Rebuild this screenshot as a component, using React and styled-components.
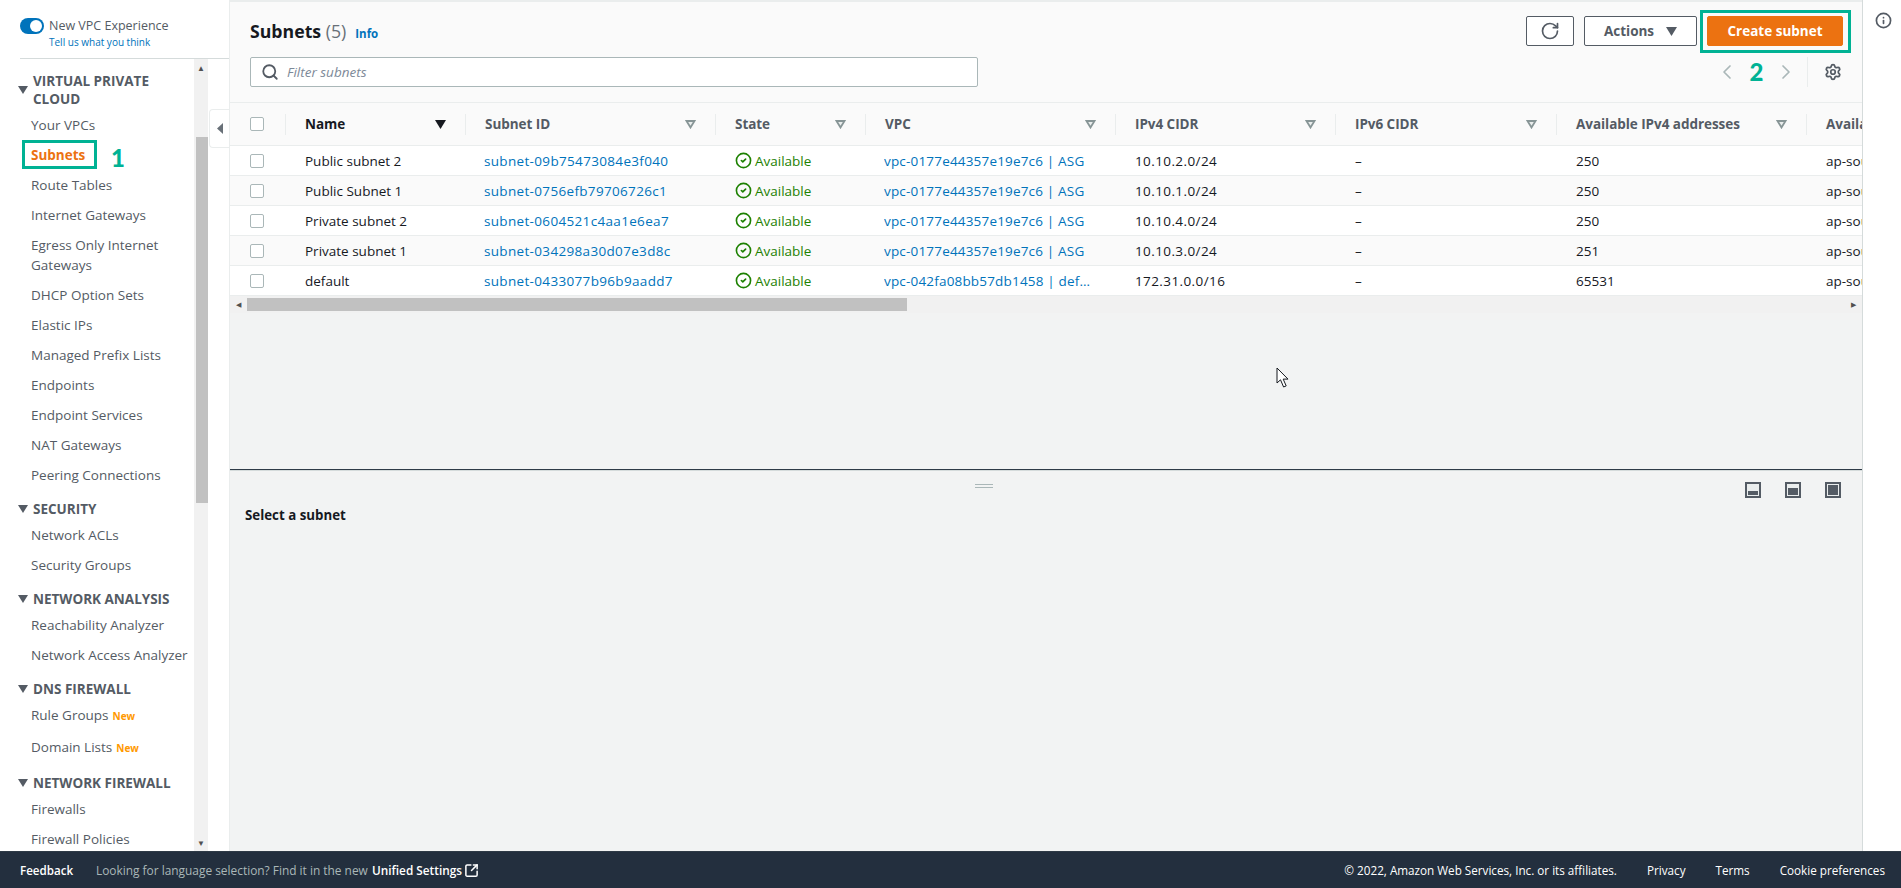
import React from "react";
import styled, { createGlobalStyle } from "styled-components";
import {
	ChevronLeft,
	ChevronRight,
	CircleCheck,
	Info,
	RotateCw,
	Search,
	Settings,
	SquareArrowOutUpRight,
} from "lucide-react";

const navSections = [
	{
		title: "VIRTUAL PRIVATE CLOUD",
		items: [
			"Your VPCs",
			"Subnets",
			"Route Tables",
			"Internet Gateways",
			"Egress Only Internet Gateways",
			"DHCP Option Sets",
			"Elastic IPs",
			"Managed Prefix Lists",
			"Endpoints",
			"Endpoint Services",
			"NAT Gateways",
			"Peering Connections",
		],
	},
	{ title: "SECURITY", items: ["Network ACLs", "Security Groups"] },
	{ title: "NETWORK ANALYSIS", items: ["Reachability Analyzer", "Network Access Analyzer"] },
	{ title: "DNS FIREWALL", items: ["Rule Groups", "Domain Lists"], fresh: true },
	{ title: "NETWORK FIREWALL", items: ["Firewalls", "Firewall Policies"] },
];

const columns = ["Name", "Subnet ID", "State", "VPC", "IPv4 CIDR", "IPv6 CIDR", "Available IPv4 addresses", "Availability Zone"];

const rows = [
	["Public subnet 2", "subnet-09b75473084e3f040", "vpc-0177e44357e19e7c6 | ASG", "10.10.2.0/24", "250"],
	["Public Subnet 1", "subnet-0756efb79706726c1", "vpc-0177e44357e19e7c6 | ASG", "10.10.1.0/24", "250"],
	["Private subnet 2", "subnet-0604521c4aa1e6ea7", "vpc-0177e44357e19e7c6 | ASG", "10.10.4.0/24", "250"],
	["Private subnet 1", "subnet-034298a30d07e3d8c", "vpc-0177e44357e19e7c6 | ASG", "10.10.3.0/24", "251"],
	["default", "subnet-0433077b96b9aadd7", "vpc-042fa08bb57db1458 | default", "172.31.0.0/16", "65531"],
];

const GRID = "55px 180px 250px 150px 250px 220px 221px 250px 220px";
const TEAL = "#00b294";

function SortMark({ active }) {
	return (
		<svg width="11" height="9" viewBox="0 0 11 9">
			{active ? (
				<path d="M0 0h11L5.5 9z" fill="#16191f" />
			) : (
				<path d="M1.5 1h8L5.5 7.5z" fill="#eaeded" stroke="#879596" strokeWidth="1.8" />
			)}
		</svg>
	);
}

function PanelIcon({ fill }) {
	return (
		<svg width="16" height="16" viewBox="0 0 16 16">
			<rect width="16" height="16" fill="#545b64" />
			<rect x="2" y="2" width="12" height="12" fill="#eaeded" />
			<rect x="3" y={13 - fill} width="10" height={fill} fill="#545b64" />
		</svg>
	);
}

function App() {
	return (
		<Page>
			<GlobalStyle />
			<Body>
				<Sidebar>
					<SideTop>
						<ToggleRow>
							<Toggle />
							<ToggleText>
								<span>New VPC Experience</span>
								<TellUs>Tell us what you think</TellUs>
							</ToggleText>
						</ToggleRow>
					</SideTop>
					<SideBottom>
						<Nav>
							{navSections.map((section) => (
								<NavSection key={section.title}>
									<SectionHead>
										<svg width="10" height="8" viewBox="0 0 10 8">
											<path d="M0 0h10L5 8z" fill="#545b64" />
										</svg>
										<span>{section.title}</span>
									</SectionHead>
									{section.items.map((item) => (
										<NavItem key={item} $active={item === "Subnets"} $fresh={section.fresh}>
											{item}
											{section.fresh && <NewTag>New</NewTag>}
										</NavItem>
									))}
								</NavSection>
							))}
						</Nav>
						<NavScroll>
							<ScrollArrow>▲</ScrollArrow>
							<NavThumb />
							<ScrollArrow $bottom>▼</ScrollArrow>
						</NavScroll>
						<CollapseStrip>
							<CollapseTab>
								<svg width="6" height="11" viewBox="0 0 6 11">
									<path d="M6 0v11L0 5.5z" fill="#687078" />
								</svg>
							</CollapseTab>
						</CollapseStrip>
					</SideBottom>
					<SubnetsMark />
					<StepOne>1</StepOne>
				</Sidebar>

				<Main>
					<UpperPane>
						<TopSection>
							<TitleRow>
								<Title>
									<strong>Subnets</strong> <Count>(5)</Count>
									<InfoLink>Info</InfoLink>
								</Title>
								<Actions>
									<IconButton>
										<RotateCw size={20} strokeWidth={2} />
									</IconButton>
									<ActionsButton>
										Actions
										<svg width="11" height="9" viewBox="0 0 11 9">
											<path d="M0 0h11L5.5 9z" fill="#545b64" />
										</svg>
									</ActionsButton>
									<PrimaryButton>Create subnet</PrimaryButton>
								</Actions>
							</TitleRow>
							<FilterRow>
								<FilterBox>
									<Search size={18} strokeWidth={2.4} color="#545b64" />
									<FilterInput placeholder="Filter subnets" />
								</FilterBox>
								<Pager>
									<ChevronLeft size={24} strokeWidth={1.7} color="#aab7b8" />
									<StepTwo>2</StepTwo>
									<ChevronRight size={24} strokeWidth={1.7} color="#aab7b8" />
									<PagerGear>
										<Settings size={18} strokeWidth={2.3} color="#545b64" />
									</PagerGear>
								</Pager>
							</FilterRow>
						</TopSection>

						<TableClip>
							<HeadRow>
								<HeadCheckCell>
									<Checkbox />
								</HeadCheckCell>
								{columns.map((label, i) => (
									<HeadCell key={label} $active={i === 0}>
										<span>{label}</span>
										<SortMark active={i === 0} />
									</HeadCell>
								))}
							</HeadRow>
							{rows.map((row, i) => (
								<Row key={row[1]} $odd={i % 2 === 1}>
									<Cell>
										<Checkbox />
									</Cell>
									<Cell>{row[0]}</Cell>
									<LinkCell $spacing="0.33px">{row[1]}</LinkCell>
									<StateCell>
										<CircleCheck size={17} strokeWidth={2.3} />
										Available
									</StateCell>
									<LinkCell $spacing="0.18px">
										<Clipped>{row[2]}</Clipped>
									</LinkCell>
									<Cell $spacing="0.4px">{row[3]}</Cell>
									<Cell>–</Cell>
									<Cell>{row[4]}</Cell>
									<Cell>ap-south-1a</Cell>
								</Row>
							))}
						</TableClip>

						<HScroll>
							<HArrow>◀</HArrow>
							<HThumb />
							<HArrow $right>▶</HArrow>
						</HScroll>
						<Cursor width="14" height="21" viewBox="0 0 14 21">
							<path
								d="M1 1v15l3.5-3.2L7.6 20l2.6-1.1-3-6.8H12z"
								fill="#fff"
								stroke="#16191f"
								strokeWidth="1"
							/>
						</Cursor>
					</UpperPane>

					<LowerPane>
						<LowerBar>
							<DragHandle />
							<PanelIcons>
								<PanelIcon fill={4} />
								<PanelIcon fill={7} />
								<PanelIcon fill={10} />
							</PanelIcons>
						</LowerBar>
						<SelectHint>Select a subnet</SelectHint>
					</LowerPane>
				</Main>

				<RightRail>
					<Info size={17} strokeWidth={2.4} color="#545b64" />
				</RightRail>

				<CreateMark />
			</Body>

			<Footer>
				<FooterLeft>
					<FooterLink>Feedback</FooterLink>
					<LangNote>
						Looking for language selection? Find it in the new
					</LangNote>
					<UnifiedLink>
						Unified Settings
						<SquareArrowOutUpRight size={15} strokeWidth={2.4} />
					</UnifiedLink>
				</FooterLeft>
				<FooterRight>
					<span>© 2022, Amazon Web Services, Inc. or its affiliates.</span>
					<span>Privacy</span>
					<span>Terms</span>
					<span>Cookie preferences</span>
				</FooterRight>
			</Footer>
		</Page>
	);
}

export default App;

const GlobalStyle = createGlobalStyle`
	html, body, #root {
		margin: 0;
		height: 100%;
	}

	body {
		font-family: "Open Sans", "Noto Sans", sans-serif;
		font-size: 14px;
		color: #16191f;
		background: #fff;
		overflow: hidden;
	}

	* {
		box-sizing: border-box;
	}
`;

const Page = styled.div`
	height: 888px;
	display: flex;
	flex-direction: column;
`;

const Body = styled.div`
	position: relative;
	flex: 1;
	min-height: 0;
	display: flex;
`;

const Sidebar = styled.aside`
	position: relative;
	width: 229px;
	flex-shrink: 0;
	display: flex;
	flex-direction: column;
	background: #fff;
`;

const SideTop = styled.div`
	height: 59px;
	margin-left: 20px;
	padding-top: 16px;
	border-bottom: 1px solid #d5dbdb;
`;

const ToggleRow = styled.div`
	display: flex;
	gap: 5px;
	align-items: flex-start;
`;

const Toggle = styled.div`
	position: relative;
	width: 24px;
	height: 16px;
	margin-top: 2px;
	border-radius: 8px;
	background: #0073bb;

	&:after {
		content: "";
		position: absolute;
		top: 2px;
		right: 2px;
		width: 12px;
		height: 12px;
		border-radius: 50%;
		background: #fff;
	}
`;

const ToggleText = styled.div`
	display: flex;
	flex-direction: column;
	padding-top: 1px;
	font-size: 12.5px;
	line-height: 18px;
	color: #545b64;
`;

const TellUs = styled.a`
	font-size: 10px;
	line-height: 15px;
	color: #0073bb;
`;

const SideBottom = styled.div`
	flex: 1;
	min-height: 0;
	display: flex;
`;

const Nav = styled.nav`
	width: 194px;
	padding-top: 13px;
	overflow: hidden;
`;

const NavSection = styled.section`
	margin-bottom: 10px;
`;

const SectionHead = styled.div`
	display: flex;
	align-items: center;
	gap: 5px;
	padding-left: 18px;
	margin-bottom: 2px;
	font-size: 13.5px;
	font-weight: 700;
	line-height: 18px;
	color: #545b64;

	svg {
		flex-shrink: 0;
	}
`;

const NavItem = styled.div`
	padding: 5px 0 5px 31px;
	padding-bottom: ${(p) => (p.$fresh ? "6px" : "5px")};
	font-size: 13.5px;
	line-height: 20px;
	font-weight: ${(p) => (p.$active ? 700 : 400)};
	color: ${(p) => (p.$active ? "#ec7211" : "#545b64")};
`;

const NewTag = styled.span`
	margin-left: 4px;
	font-size: 10px;
	font-weight: 700;
	color: #ff9900;
`;

const NavScroll = styled.div`
	position: relative;
	width: 14px;
	padding: 78px 0 0 2px;
	background: #f1f1f1;
`;

const NavThumb = styled.div`
	height: 366px;
	background: #c1c1c1;
`;

const ScrollArrow = styled.span`
	position: absolute;
	left: 3px;
	font-size: 8px;
	line-height: 8px;
	color: #505050;
	${(p) => (p.$bottom ? "bottom: 4px;" : "top: 5px;")}
`;

const CollapseStrip = styled.div`
	flex: 1;
	display: flex;
	justify-content: flex-end;
	align-items: flex-start;
	padding-top: 50px;
`;

const CollapseTab = styled.div`
	width: 20px;
	height: 39px;
	display: flex;
	align-items: center;
	justify-content: center;
	background: #fff;
	border: 1px solid #eaeded;
	border-right: 0;
	border-radius: 4px 0 0 4px;
`;

const SubnetsMark = styled.div`
	position: absolute;
	left: 22px;
	top: 140px;
	width: 75px;
	height: 29px;
	border: 3px solid ${TEAL};
`;

const StepOne = styled.span`
	position: absolute;
	left: 111px;
	top: 142px;
	font-family: "Lato", sans-serif;
	font-size: 24px;
	line-height: 31px;
	font-weight: 900;
	color: ${TEAL};
`;

const Main = styled.main`
	flex: 1;
	min-width: 0;
	display: flex;
	flex-direction: column;
	background: #f2f3f3;
	border-left: 1px solid #eaeded;
`;

const UpperPane = styled.div`
	position: relative;
	height: 469px;
	flex-shrink: 0;
	overflow: hidden;
`;

const TopSection = styled.div`
	height: 103px;
	padding: 14px 19px 0 20px;
	background: #fafafa;
	border-top: 2px solid #eaeded;
	border-bottom: 1px solid #eaeded;
`;

const TitleRow = styled.div`
	display: flex;
	align-items: center;
	justify-content: space-between;
	height: 30px;
`;

const Title = styled.h1`
	margin: 0;
	padding-top: 2px;
	font-size: 17.7px;
	font-weight: 400;
	line-height: 30px;
	color: #687078;

	strong {
		color: #16191f;
		font-weight: 700;
	}
`;

const Count = styled.span`
	color: #687078;
`;

const InfoLink = styled.a`
	margin-left: 9px;
	font-size: 11.5px;
	font-weight: 700;
	color: #0073bb;
`;

const Actions = styled.div`
	display: flex;
	gap: 10px;
`;

const IconButton = styled.button`
	width: 48px;
	height: 30px;
	display: flex;
	align-items: center;
	justify-content: center;
	padding: 0;
	background: #fff;
	border: 1px solid #545b64;
	border-radius: 2px;
	color: #545b64;
`;

const ActionsButton = styled.button`
	width: 113px;
	height: 30px;
	display: flex;
	align-items: center;
	justify-content: center;
	gap: 12px;
	background: #fff;
	border: 1px solid #545b64;
	border-radius: 2px;
	font: 700 13.5px "Open Sans", sans-serif;
	color: #545b64;
`;

const PrimaryButton = styled.button`
	width: 136px;
	height: 30px;
	background: #ec7211;
	border: 1px solid #ec7211;
	border-radius: 2px;
	font: 700 13.5px "Open Sans", sans-serif;
	color: #fff;
`;

const FilterRow = styled.div`
	display: flex;
	align-items: center;
	justify-content: space-between;
	margin-top: 11px;
	height: 30px;
`;

const FilterBox = styled.div`
	width: 728px;
	height: 30px;
	display: flex;
	align-items: center;
	gap: 6px;
	padding-left: 10px;
	background: #fff;
	border: 1px solid #aab7b8;
	border-radius: 2px;
`;

const FilterInput = styled.input`
	flex: 1;
	border: 0;
	outline: 0;
	background: transparent;
	font: italic 400 13.5px "Open Sans", sans-serif;

	&::placeholder {
		color: #7d8998;
		opacity: 1;
	}
`;

const Pager = styled.div`
	display: flex;
	align-items: center;
`;

const StepTwo = styled.span`
	width: 35px;
	text-align: center;
	font-family: "Lato", sans-serif;
	font-size: 24px;
	line-height: 30px;
	font-weight: 900;
	color: ${TEAL};
`;

const PagerGear = styled.div`
	height: 30px;
	margin-left: 9px;
	padding: 0 1px 0 16px;
	display: flex;
	align-items: center;
	border-left: 1px solid #eaeded;
`;

const TableClip = styled.div`
	overflow: hidden;
`;

const HeadRow = styled.div`
	display: grid;
	grid-template-columns: ${GRID};
	align-items: center;
	width: max-content;
	height: 43px;
	background: #fafafa;
	border-bottom: 1px solid #eaeded;
`;

const HeadCheckCell = styled.div`
	padding-left: 20px;
`;

const HeadCell = styled.div`
	height: 21px;
	display: flex;
	align-items: center;
	justify-content: space-between;
	padding: 0 19px 0 19px;
	border-left: 1px solid #eaeded;
	font-size: 13.5px;
	font-weight: 700;
	letter-spacing: -0.05px;
	white-space: nowrap;
	overflow: hidden;
	color: ${(p) => (p.$active ? "#16191f" : "#545b64")};
`;

const Row = styled.div`
	display: grid;
	grid-template-columns: ${GRID};
	align-items: center;
	width: max-content;
	height: 30px;
	background: ${(p) => (p.$odd ? "#fafafa" : "#fff")};
	border-bottom: 1px solid #eaeded;
`;

const Cell = styled.div`
	padding-left: 20px;
	font-size: 13.5px;
	letter-spacing: ${(p) => p.$spacing || "0"};
	white-space: nowrap;
	overflow: hidden;
`;

const LinkCell = styled(Cell)`
	padding-left: 19px;
	color: #0073bb;
`;

const Clipped = styled.div`
	width: 211px;
	overflow: hidden;
	text-overflow: ellipsis;
`;

const StateCell = styled(Cell)`
	display: flex;
	align-items: center;
	gap: 3px;
	color: #1d8102;
`;

const Checkbox = styled.div`
	width: 14px;
	height: 14px;
	background: #fff;
	border: 1px solid #aab7b8;
	border-radius: 2px;
`;

const HScroll = styled.div`
	height: 17px;
	display: flex;
	align-items: center;
	background: #f1f1f1;
`;

const HArrow = styled.span`
	width: 17px;
	flex-shrink: 0;
	margin-left: ${(p) => (p.$right ? "auto" : "0")};
	text-align: center;
	font-size: 7px;
	color: #505050;
`;

const HThumb = styled.div`
	width: 660px;
	height: 13px;
	background: #c1c1c1;
`;

const Cursor = styled.svg`
	position: absolute;
	left: 1046px;
	top: 367px;
`;

const LowerPane = styled.div`
	flex: 1;
	border-top: 1px solid #2e3a46;
	box-shadow: inset 0 1px 0 #d5dbdb;
	padding: 12px 21px 0 15px;
`;

const LowerBar = styled.div`
	display: flex;
	justify-content: space-between;
	align-items: flex-start;
`;

const DragHandle = styled.div`
	width: 18px;
	height: 4px;
	margin: 2px 0 0 730px;
	border-top: 1px solid #aab7b8;
	border-bottom: 1px solid #aab7b8;
`;

const PanelIcons = styled.div`
	display: flex;
	gap: 24px;
`;

const SelectHint = styled.div`
	margin-top: 7px;
	font-size: 13.3px;
	font-weight: 700;
	line-height: 20px;
`;

const RightRail = styled.aside`
	width: 39px;
	flex-shrink: 0;
	padding: 12px 0 0 12px;
	background: #fff;
	border-left: 1px solid #d5dbdb;
`;

const CreateMark = styled.div`
	position: absolute;
	left: 1700px;
	top: 10px;
	width: 151px;
	height: 43px;
	border: 3px solid ${TEAL};
	pointer-events: none;
`;

const Footer = styled.footer`
	height: 37px;
	flex-shrink: 0;
	display: flex;
	align-items: center;
	justify-content: space-between;
	padding: 0 16px 0 20px;
	background: #232f3e;
	border-top: 1px solid #2e3a46;
	font-size: 12px;
	color: #fff;
`;

const FooterLeft = styled.div`
	display: flex;
	align-items: center;
`;

const FooterLink = styled.a`
	width: 76px;
	font-size: 11.6px;
	font-weight: 600;
`;

const LangNote = styled.span`
	width: 276px;
	font-size: 11.9px;
	color: #aab7b8;
	white-space: nowrap;
`;

const UnifiedLink = styled.a`
	display: flex;
	align-items: center;
	gap: 2px;
	font-size: 11.8px;
	font-weight: 600;
`;

const FooterRight = styled.div`
	display: flex;
	gap: 30px;
	font-size: 11.7px;
`;
